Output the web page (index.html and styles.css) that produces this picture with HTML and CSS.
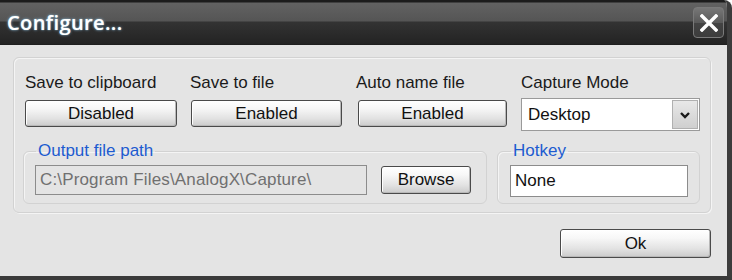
FILE: index.html
```html
<!DOCTYPE html>
<html>
<head>
<meta charset="utf-8">
<link rel="stylesheet" href="styles.css">
</head>
<body>
<div class="window">
  <div class="titlebar">
    <span class="title">Configure...</span>
    <button class="close" aria-label="Close">
      <svg width="18" height="18" viewBox="0 0 18 18"><path d="M2 2 L16 16 M16 2 L2 16" stroke="#fff" stroke-width="3.4" stroke-linecap="square"/></svg>
    </button>
  </div>
  <div class="content">
    <div class="group">
      <div class="row1">
        <div class="col">
          <div class="label">Save to clipboard</div>
          <button class="btn">Disabled</button>
        </div>
        <div class="col">
          <div class="label">Save to file</div>
          <button class="btn">Enabled</button>
        </div>
        <div class="col">
          <div class="label">Auto name file</div>
          <button class="btn">Enabled</button>
        </div>
        <div class="col">
          <div class="label">Capture Mode</div>
          <div class="select">
            <span class="select-text">Desktop</span>
            <span class="select-arrow">
              <svg width="12" height="8" viewBox="0 0 12 8"><path d="M2 2 L6 6 L10 2" stroke="#1a1a1a" stroke-width="2.4" fill="none"/></svg>
            </span>
          </div>
        </div>
      </div>
      <div class="row2">
        <fieldset class="sub sub-path">
          <legend>Output file path</legend>
          <div class="path-row">
            <div class="field disabled">C:\Program Files\AnalogX\Capture\</div>
            <button class="btn browse">Browse</button>
          </div>
        </fieldset>
        <fieldset class="sub sub-hotkey">
          <legend>Hotkey</legend>
          <div class="field hotkey">None</div>
        </fieldset>
      </div>
    </div>
    <div class="footer">
      <button class="btn ok">Ok</button>
    </div>
  </div>
</div>
</body>
</html>
```

FILE: styles.css
```css
* { box-sizing: border-box; }
html, body { margin: 0; padding: 0; background: #ffffff; }
body {
  font-family: "Liberation Sans", Arial, sans-serif;
  font-size: 17px;
  color: #111;
}
.window {
  width: 732px;
  height: 280px;
  display: flex;
  flex-direction: column;
  background: #e4e4e4;
  border-right: 5px solid #3c3c3c;
  border-bottom: 4px solid #3a3a3a;
  border-top-right-radius: 8px;
  overflow: hidden;
}
.titlebar {
  height: 45px;
  flex: none;
  display: flex;
  align-items: center;
  justify-content: space-between;
  padding: 0 3px 2px 7px;
  background: linear-gradient(to bottom, #1c1c1c 0, #1c1c1c 2px, #626262 3px, #555 21px, #333 22px, #232323 44px, #1a1a1a 45px);
}
.title {
  font-family: "Open Sans", sans-serif;
  font-weight: 600;
  font-size: 20px;
  color: #fff;
  letter-spacing: 0.4px;
  text-shadow: 0 0 3px #7fa8c8, 0 0 1px #9cc;
  margin-top: 2px;
}
.close {
  width: 31px;
  height: 31px;
  margin-top: 2px;
  border: 1px solid #7a7a7a;
  border-radius: 4px;
  background: linear-gradient(to bottom, #777 0, #5a5a5a 50%, #444 51%, #3c3c3c 100%);
  display: flex;
  align-items: center;
  justify-content: center;
  padding: 0;
}
.content {
  flex: 1;
  display: flex;
  flex-direction: column;
  padding: 12px 16px 0 13px;
}
.group {
  width: 698px;
  height: 156px;
  border: 1px solid #d2d2d2;
  border-radius: 6px;
  box-shadow: inset 1px 1px 0 #f4f4f4, 1px 1px 0 #f4f4f4;
  padding: 15px 0 0 11px;
}
.row1 {
  display: grid;
  grid-template-columns: 152px 151px 151px 178px;
  column-gap: 14px;
}
.col { display: flex; flex-direction: column; }
.label {
  height: 20px;
  line-height: 20px;
  white-space: nowrap;
  color: #1a1a1a;
}
.col:nth-child(2) .label { margin-left: -1px; }
.btn {
  font-family: "Liberation Sans", Arial, sans-serif;
  font-size: 17px;
  color: #111;
  height: 27px;
  padding: 0;
  border: 1px solid #4a4a4a;
  border-radius: 3px;
  background: linear-gradient(to bottom, #ffffff 0, #f7f7f7 30%, #e2e2e2 70%, #cbcbcb 100%);
  box-shadow: inset 1px 1px 0 #fff, inset -1px -1px 0 #b8b8b8;
  line-height: 24px;
}
.row1 .btn { margin-top: 7px; }
.col:nth-child(3) .btn { margin-left: 2px; }
.select {
  margin-top: 5px;
  height: 33px;
  background: #fff;
  border: 1px solid #9a9a9a;
  display: flex;
  align-items: center;
  justify-content: space-between;
  padding: 0 1px 0 6px;
  width: 179px;
}
.select-text { color: #111; }
.select-arrow {
  width: 26px;
  height: 29px;
  background: linear-gradient(to bottom, #e8e8e8, #cfcfcf);
  border: 1px solid #b0b0b0;
  display: flex;
  align-items: center;
  justify-content: center;
}
.row2 {
  display: flex;
  gap: 10px;
  margin-top: 12px;
  margin-left: -2px;
}
.sub {
  margin: 0;
  border: 1px solid #d2d2d2;
  border-radius: 6px;
  box-shadow: inset 1px 1px 0 #f4f4f4;
  height: 61px;
  padding: 0 0 0 11px;
}
.sub legend {
  color: #1d5bd0;
  padding: 0 2px;
  margin-left: 1px;
  line-height: 16px;
  font-size: 17px;
}
.sub-path { width: 464px; }
.sub-hotkey { width: 203px; padding-left: 12px; }
.path-row {
  display: flex;
  align-items: center;
  gap: 14px;
  margin-top: 6px;
}
.field {
  height: 30px;
  border: 1px solid #8c8c8c;
  line-height: 28px;
  padding-left: 4px;
  white-space: nowrap;
  overflow: hidden;
}
.field.disabled {
  width: 332px;
  background: #e4e4e4;
  color: #707070;
  letter-spacing: 0.15px;
}
.browse { width: 90px; height: 28px; }
.field.hotkey {
  margin-top: 6px;
  width: 178px;
  height: 32px;
  background: #fff;
  color: #111;
  line-height: 30px;
}
.footer {
  display: flex;
  justify-content: flex-end;
  padding-top: 16px;
}
.ok { width: 151px; height: 29px; }
```
